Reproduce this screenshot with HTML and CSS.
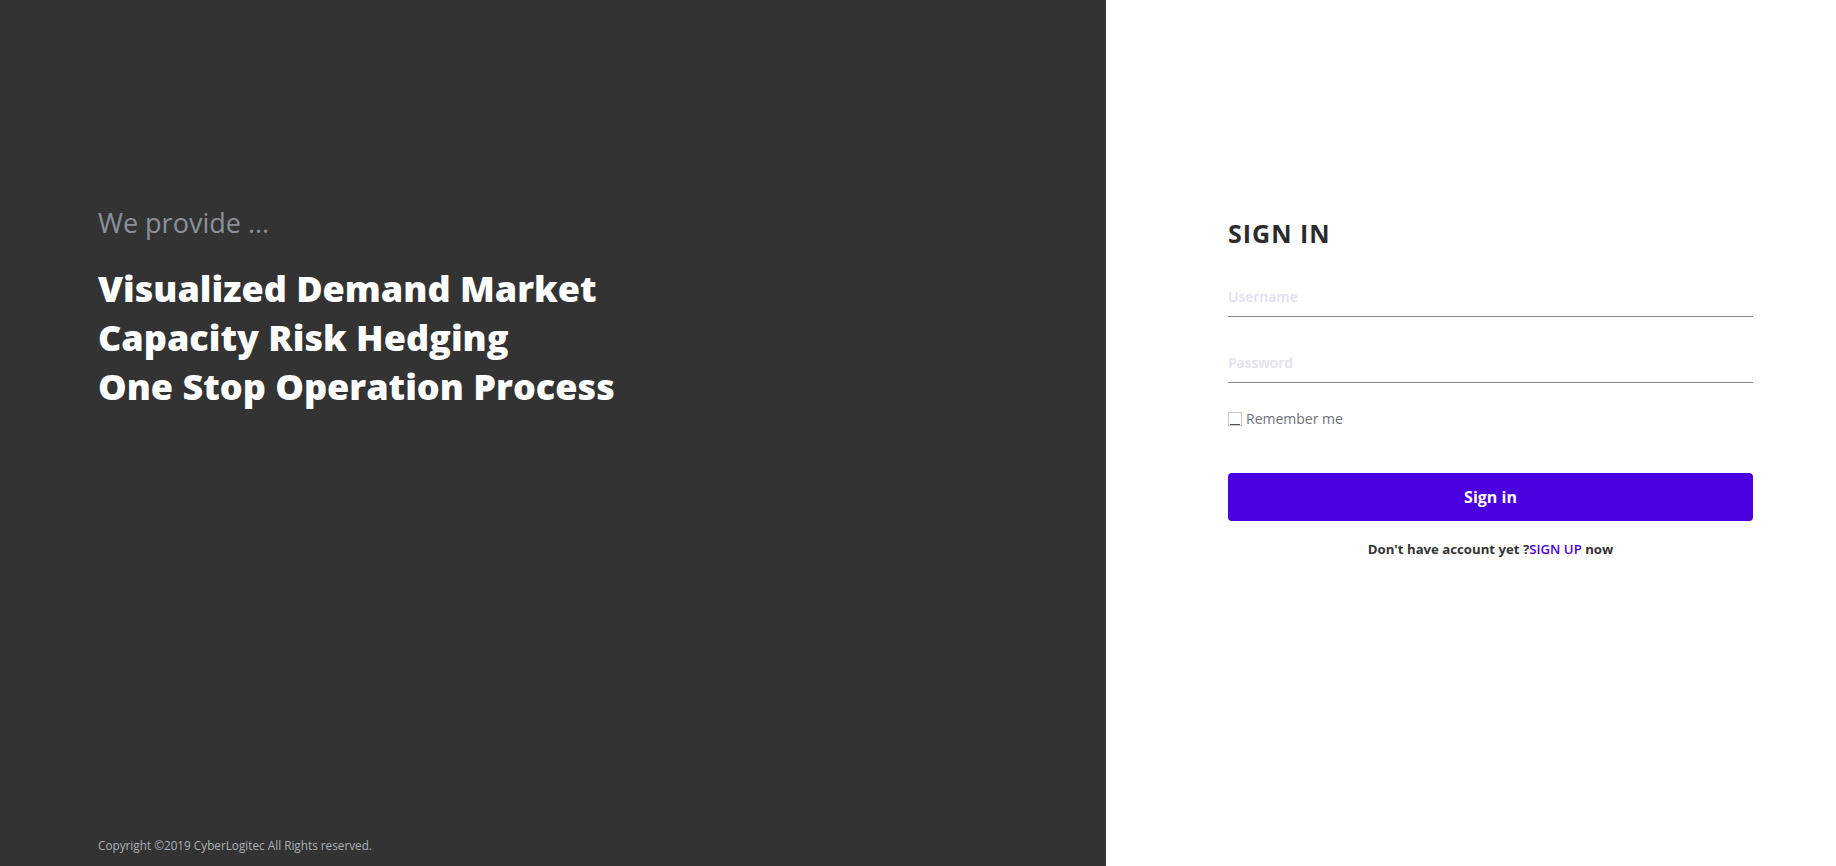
FILE: index.html
```html
<!DOCTYPE html>
<html lang="en">
<head>
<meta charset="utf-8">
<title>Sign in</title>
<link rel="stylesheet" href="styles.css">
</head>
<body>
<div class="page">
  <section class="hero">
    <div class="hero-text">
      <p class="lead">We provide ...</p>
      <h1 class="headline">Visualized Demand Market<br>Capacity Risk Hedging<br>One Stop Operation Process</h1>
    </div>
    <p class="copyright">Copyright ©2019 CyberLogitec All Rights reserved.</p>
  </section>
  <section class="auth">
    <form class="form">
      <h2 class="title">SIGN IN</h2>
      <input class="field" type="text" placeholder="Username">
      <input class="field field-pw" type="password" placeholder="Password">
      <label class="remember"><span class="box"></span>Remember me</label>
      <button class="btn" type="button">Sign in</button>
      <p class="signup">Don't have account yet ?<a class="signup-link" href="#">SIGN UP</a> now</p>
    </form>
  </section>
</div>
</body>
</html>
```
FILE: styles.css
```css
* { box-sizing: border-box; }
html, body { margin: 0; padding: 0; height: 100%; }
body { font-family: "Open Sans", "Liberation Sans", sans-serif; }

.page {
  display: flex;
  height: 866px;
}

.hero {
  width: 1106px;
  flex: none;
  background: #333333;
  padding: 207px 0 12px 98px;
  display: flex;
  flex-direction: column;
  justify-content: space-between;
}

.lead {
  margin: 0;
  font-size: 27px;
  line-height: 31px;
  color: #8b919b;
  font-weight: 400;
}

.headline {
  margin: 26px 0 0;
  font-size: 36px;
  line-height: 49px;
  font-weight: 800;
  color: #ffffff;
}

.copyright {
  margin: 0;
  font-size: 11.75px;
  line-height: 17px;
  color: #a9b0b8;
}

.auth {
  flex: 1;
  background: #ffffff;
  padding: 218px 0 0 122px;
}

.form {
  width: 525px;
  display: flex;
  flex-direction: column;
}

.title {
  margin: 0;
  font-size: 25px;
  line-height: 30px;
  font-weight: 700;
  letter-spacing: 1px;
  color: #2b2b2b;
}

.field {
  margin-top: 33px;
  border: 0;
  border-bottom: 1px solid #8a8a8e;
  padding: 6px 0 10px;
  font-family: inherit;
  font-size: 14px;
  line-height: 19px;
  height: 36px;
  outline: none;
  background: transparent;
  color: #333;
}
.field-pw { margin-top: 30px; }
.field::placeholder { color: #dfe0ee; font-weight: 600; }

.remember {
  margin-top: 26px;
  display: flex;
  align-items: center;
  font-size: 14px;
  line-height: 20px;
  color: #6b6f78;
}
.box {
  width: 14px;
  height: 14px;
  border: 1px solid #c9c9c9;
  margin-right: 4px;
  position: relative;
  background: #fff;
}
.box::after {
  content: "";
  position: absolute;
  left: 1px;
  right: 1px;
  bottom: 0;
  height: 1px;
  background: #555;
}

.btn {
  margin-top: 44px;
  height: 48px;
  border: 0;
  border-radius: 4px;
  background: #4b00e0;
  color: #ffffff;
  font-family: inherit;
  font-size: 16px;
  font-weight: 700;
}

.signup {
  margin: 19px 0 0;
  text-align: center;
  font-size: 13.2px;
  line-height: 18px;
  font-weight: 700;
  color: #333333;
}
.signup-link {
  color: #4b00e0;
  text-decoration: none;
  font-weight: 600;
}
```
